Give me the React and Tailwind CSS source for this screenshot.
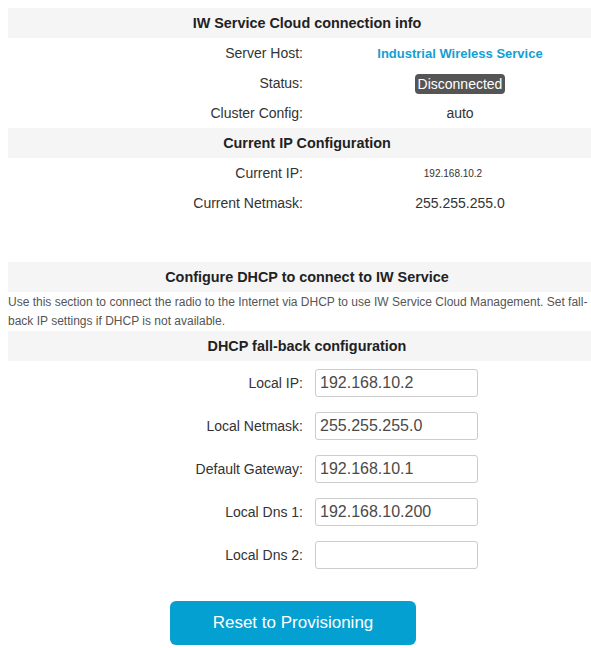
import React from 'react';

const InfoRow = ({ label, children }) => (
  <div className="flex h-[30px] items-center pt-[1px]">
    <div className="w-[295px] text-right">{label}</div>
    <div className="flex flex-1 justify-center pl-[26px]">{children}</div>
  </div>
);

// header bars run a little past the right edge of the window, so the title sits right of centre
const SectionHeader = ({ title }) => (
  <div className="-mr-[15px] flex h-[30px] items-center justify-center bg-[#f5f5f5] pt-[1px] text-[14.4px] font-bold text-[#222]">
    {title}
  </div>
);

const FieldRow = ({ label, value }) => (
  <div className="flex h-[43px] items-center">
    <div className="w-[295px] pt-[1px] text-right">{label}</div>
    <input
      type="text"
      defaultValue={value}
      className="ml-[12px] h-[28px] w-[163px] rounded-[3px] border border-[#ccc] px-[4px] text-[16px] text-[#4a4a4a] outline-none"
    />
  </div>
);

export default function App() {
  const fields = [
    ['Local IP:', '192.168.10.2'],
    ['Local Netmask:', '255.255.255.0'],
    ['Default Gateway:', '192.168.10.1'],
    ['Local Dns 1:', '192.168.10.200'],
    ['Local Dns 2:', ''],
  ];

  return (
    <div className="min-h-screen overflow-hidden bg-white pl-[8px] pt-[8px] text-[14px] text-[#333] [font-family:'Liberation_Sans',Arial,sans-serif]">
      {/* Cloud connection info */}
      <SectionHeader title="IW Service Cloud connection info" />
      <InfoRow label="Server Host:">
        <span className="text-[13px] font-bold text-[#139fd3]">Industrial Wireless Service</span>
      </InfoRow>
      <InfoRow label="Status:">
        <span className="h-[20px] rounded-[4px] bg-[#555] px-[3px] leading-[20px] text-white">Disconnected</span>
      </InfoRow>
      <InfoRow label="Cluster Config:">
        <span>auto</span>
      </InfoRow>

      {/* Current IP */}
      <SectionHeader title="Current IP Configuration" />
      <InfoRow label="Current IP:">
        <span className="pr-[14px] text-[10px]">192.168.10.2</span>
      </InfoRow>
      <InfoRow label="Current Netmask:">
        <span>255.255.255.0</span>
      </InfoRow>

      <div className="h-[44px]" />

      {/* DHCP */}
      <SectionHeader title="Configure DHCP to connect to IW Service" />
      <p className="pr-[2px] pt-[1px] text-[12px] leading-[19px] text-[#555]">
        Use this section to connect the radio to the Internet via DHCP to use IW Service Cloud Management. Set fall-back IP settings if DHCP is not available.
      </p>
      <SectionHeader title="DHCP fall-back configuration" />
      {fields.map(([label, value]) => (
        <FieldRow key={label} label={label} value={value} />
      ))}

      <div className="flex pl-[162px] pt-[25px]">
        <button className="h-[44px] w-[246px] rounded-[6px] bg-[#04a0d2] text-[17px] text-white">
          Reset to Provisioning
        </button>
      </div>
    </div>
  );
}
